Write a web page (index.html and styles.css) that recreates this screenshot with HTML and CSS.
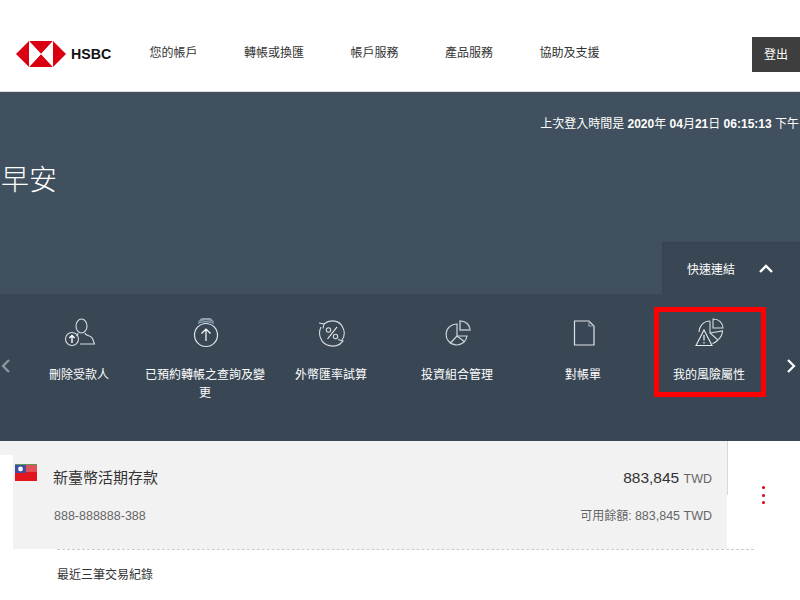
FILE: index.html
```html
<!DOCTYPE html>
<html lang="zh-Hant">
<head>
  <meta charset="UTF-8" />
  <meta name="viewport" content="width=device-width, initial-scale=1.0" />
  <title>HSBC 網上銀行</title>
  <link rel="stylesheet" href="styles.css">
</head>
<body>
  <header class="topbar">
    <a class="logo" href="#">
      <svg class="logo-mark" width="50" height="26" viewBox="0 0 50 26">
        <polygon fill="#db0011" points="0,13 13,0 13,26"/>
        <polygon fill="#db0011" points="50,13 37,0 37,26"/>
        <polygon fill="#db0011" points="13,0 37,0 25,13"/>
        <polygon fill="#db0011" points="13,26 37,26 25,13"/>
        <polygon fill="#fff" points="13,0 25,13 13,26"/>
        <polygon fill="#fff" points="37,0 25,13 37,26"/>
      </svg>
      <span class="logo-text">HSBC</span>
    </a>
    <nav class="mainnav">
      <a href="#">您的帳戶</a>
      <a href="#">轉帳或換匯</a>
      <a href="#">帳戶服務</a>
      <a href="#">產品服務</a>
      <a href="#">協助及支援</a>
    </nav>
    <button class="logout">登出</button>
  </header>

  <section class="hero">
    <p class="lastlogin">上次登入時間是 <b>2020</b>年 <b>04</b>月<b>21</b>日 <b>06:15:13</b> 下午</p>
    <h1 class="greeting">早安</h1>
    <div class="quick-tab">
      <span>快速連結</span>
      <svg width="14" height="9" viewBox="0 0 14 9"><path d="M1 8 L7 2 L13 8" fill="none" stroke="#fff" stroke-width="2.4"/></svg>
    </div>
  </section>

  <section class="quick">
    <svg class="arrow" width="9" height="14" viewBox="0 0 9 14"><path d="M8 1 L2 7 L8 13" fill="none" stroke="#8d9aa6" stroke-width="2.2"/></svg>
    <ul class="quick-list">
      <li class="quick-item">
        <svg class="qi" width="32" height="30" viewBox="0 0 32 30" fill="none" stroke="#d8dcdf" stroke-width="1.1">
          <ellipse cx="17.5" cy="8" rx="5.5" ry="7"/>
          <path d="M14 15 C14 17 13 17.5 12.5 18 M21 15 C21 18 27 17 28.5 20.5 L30.5 26 H16"/>
          <circle cx="8" cy="21" r="6.5"/>
          <path d="M8 25 V17.5 M5.3 20 L8 17.5 L10.7 20" stroke="#fff" stroke-width="1.4"/>
        </svg>
        <span>刪除受款人</span>
      </li>
      <li class="quick-item">
        <svg class="qi" width="26" height="30" viewBox="0 0 26 30" fill="none" stroke="#dbe6ec" stroke-width="1.2">
          <circle cx="13" cy="17" r="11.5"/>
          <path d="M13 23 V11 M8.5 15.5 L13 11 L17.5 15.5" stroke="#fff"/>
          <path d="M5 5.5 C8 3 18 3 21 5.5 M5.5 3.5 C8.5 1 17.5 1 20.5 3.5 M7 1.5 C10 0 16 0 19 1.5" stroke="#8fa4b3"/>
        </svg>
        <span>已預約轉帳之查詢及變更</span>
      </li>
      <li class="quick-item">
        <svg class="qi" width="28" height="28" viewBox="0 0 28 28" fill="none" stroke="#d8dcdf" stroke-width="1.1">
          <path d="M6 5 C12 0 22 1 25 9 C27 13 26 18 24 21"/>
          <path d="M22 25 C16 29 6 27 3 20 C1 16 1 12 3 8"/>
          <path d="M1 4 L6 5 L5 9.5 M20 20.5 L25 22 L21 26"/>
          <path d="M9.5 20 L19 8" stroke="#fff"/>
          <circle cx="10.5" cy="11" r="2.2"/>
          <circle cx="17.5" cy="17.5" r="2.2"/>
        </svg>
        <span>外幣匯率試算</span>
      </li>
      <li class="quick-item">
        <svg class="qi" width="26" height="26" viewBox="0 0 26 26" fill="none" stroke="#d0d4d8" stroke-width="1.2">
          <path d="M12 4 A10.5 10.5 0 1 0 22 16 H12 Z"/>
          <path d="M12 16 L5 23.5 M12 16 L20 22"/>
          <path d="M15 1 C21 1 25 5 25 10 H15 Z" stroke="#b9bfc5" stroke-width="1.5"/>
        </svg>
        <span>投資組合管理</span>
      </li>
      <li class="quick-item">
        <svg class="qi" width="22" height="26" viewBox="0 0 22 26" fill="none" stroke="#dfe2e5" stroke-width="1.2">
          <path d="M1.5 1 H16 L21 6 V25 H1.5 Z"/>
          <path d="M16 1 V6 H21" stroke="#9ba6af"/>
        </svg>
        <span>對帳單</span>
      </li>
      <li class="quick-item quick-item-marked">
        <svg class="qi" width="30" height="30" viewBox="0 0 30 30" fill="none" stroke="#d8dcdf" stroke-width="1.1">
          <path d="M15 3 C8 3 4 9 4 14"/>
          <path d="M15 3 V15 L23 22 C21 24 19 25 17.5 25.5"/>
          <path d="M18 1 C24 1 28 5 28 10 H18 Z"/>
          <path d="M15 15 L27.5 13 C27.5 16 26 19 23.5 21.5"/>
          <path d="M9 12 L17 27.5 H1 Z" stroke="#e8eaec"/>
          <path d="M9 17 V22.5 M9 24 V25.5" stroke="#fff"/>
        </svg>
        <span>我的風險屬性</span>
      </li>
    </ul>
    <svg class="arrow" width="9" height="14" viewBox="0 0 9 14"><path d="M1 1 L7 7 L1 13" fill="none" stroke="#fff" stroke-width="2.2"/></svg>
  </section>

  <section class="account">
    <div class="account-card">
      <div class="account-strip"></div>
      <div class="account-head">
        <svg class="flag" width="22" height="17" viewBox="0 0 22 17">
          <rect width="22" height="17" fill="#e2161c"/>
          <rect width="22" height="1" fill="#5f9a58"/>
          <rect y="1" width="22" height="7" fill="#e0525a"/>
          <rect y="1" width="11" height="8" fill="#3f4f9f"/>
          <circle cx="5.5" cy="5" r="2.4" fill="#fff"/>
        </svg>
        <h2 class="account-name">新臺幣活期存款</h2>
        <p class="account-amount">883,845 <small>TWD</small></p>
      </div>
      <div class="account-sub">
        <span class="account-no">888-888888-388</span>
        <span class="account-avail">可用餘額: <span class="account-no">883,845 TWD</span></span>
      </div>
    </div>
    <div class="account-side">
      <span class="kebab"><i></i><i></i><i></i></span>
    </div>
  </section>

  <section class="recent">最近三筆交易紀錄</section>
</body>
</html>
```

FILE: styles.css
```css
* {
  box-sizing: border-box;
}
html, body {
  height: 600px;
  overflow: hidden;
}
body {
  margin: 0;
  background-color: #fff;
  color: #333;
  font-family: "Liberation Sans", "Noto Sans CJK TC", sans-serif;
  font-size: 12px;
}
a {
  color: inherit;
  text-decoration: none;
}

/* top bar */
.topbar {
  display: flex;
  height: 92px;
  padding: 37px 0 0 16px;
  border-bottom: 1px solid #d9dcde;
}
.logo {
  display: flex;
  align-items: flex-start;
  gap: 5px;
  width: 133.5px;
  padding-top: 4px;
}
.logo-text {
  font-size: 14.2px;
  font-weight: bold;
  line-height: 26px;
  color: #111;
}
.mainnav {
  display: flex;
  gap: 46.5px;
  padding-top: 7px;
  line-height: 18px;
}
.logout {
  width: 48px;
  height: 35px;
  margin-left: auto;
  padding: 0 0 2px;
  border: none;
  background-color: #3e3e3e;
  color: #fff;
  font: inherit;
}

/* hero */
.hero {
  display: flex;
  flex-direction: column;
  height: 202px;
  background-color: #40505e;
  color: #fff;
}
.lastlogin {
  margin: 23px 1px 0 0;
  line-height: 18px;
  text-align: right;
  white-space: nowrap;
}
.lastlogin b {
  font-weight: bold;
}
.greeting {
  margin: 28px 0 0 1px;
  font-size: 28px;
  font-weight: 300;
  line-height: 40px;
}
.quick-tab {
  display: flex;
  align-items: center;
  gap: 24px;
  align-self: flex-end;
  width: 138px;
  height: 52px;
  margin-top: auto;
  padding: 0 0 0 24px;
  background-color: #394755;
  border-left: 1px solid #34424f;
  border-top: 1px solid #34424f;
}

/* quick links */
.quick {
  display: flex;
  align-items: center;
  height: 147px;
  padding: 0 4px 0 1px;
  background-color: #394755;
  color: #fff;
}
.quick .arrow {
  flex: none;
  margin-top: -3px;
}
.quick-list {
  display: flex;
  flex: 1;
  align-self: stretch;
  margin: 0 0 0 6px;
  padding: 0;
  list-style: none;
}
.quick-item {
  position: relative;
  display: flex;
  flex-direction: column;
  align-items: center;
  width: 126px;
  padding: 0 3px;
  line-height: 18px;
  text-align: center;
}
.quick-item .qi {
  flex: none;
  height: 30px;
  margin: 24px 0 18px 2px;
}
.quick-item-marked::after {
  content: "";
  position: absolute;
  top: 13px;
  left: 8px;
  box-sizing: border-box;
  width: 112px;
  height: 90px;
  border: 5px solid #f00;
}

/* account */
.account {
  display: grid;
  grid-template-columns: 728px 1fr;
  height: 108px;
}
.account-strip {
  height: 14px;
  background-color: #f2f2f2;
  border-right: 1px solid #d8d8d8;
}
.account-head {
  display: flex;
  height: 40px;
  margin-left: 13px;
  padding: 9px 15px 0 2px;
  background-color: #f2f2f2;
  border-right: 1px solid #d8d8d8;
}
.flag {
  flex: none;
}
.account-name {
  margin: 4px 0 0 16px;
  font-size: 15px;
  font-weight: normal;
  line-height: 20px;
}
.account-amount {
  margin: 4px 0 0 auto;
  font-size: 15.5px;
  line-height: 20px;
}
.account-amount small {
  font-size: 12.5px;
  color: #666;
}
.account-sub {
  display: flex;
  justify-content: space-between;
  width: 714px;
  height: 54px;
  margin-left: 13px;
  padding: 12px 15px 0 41px;
  background-color: #f2f2f2;
  color: #666;
  line-height: 18px;
}
.account-no {
  font-size: 12.5px;
}
.account-side {
  padding: 45px 0 0 34px;
}
.kebab {
  display: flex;
  flex-direction: column;
  gap: 4.5px;
  width: 3px;
}
.kebab i {
  width: 3px;
  height: 3px;
  border-radius: 50%;
  background-color: #db0011;
}

/* recent */
.recent {
  width: 697px;
  margin-left: 57px;
  padding-top: 16px;
  border-top: 1px dashed #ccc;
  line-height: 18px;
}
```
